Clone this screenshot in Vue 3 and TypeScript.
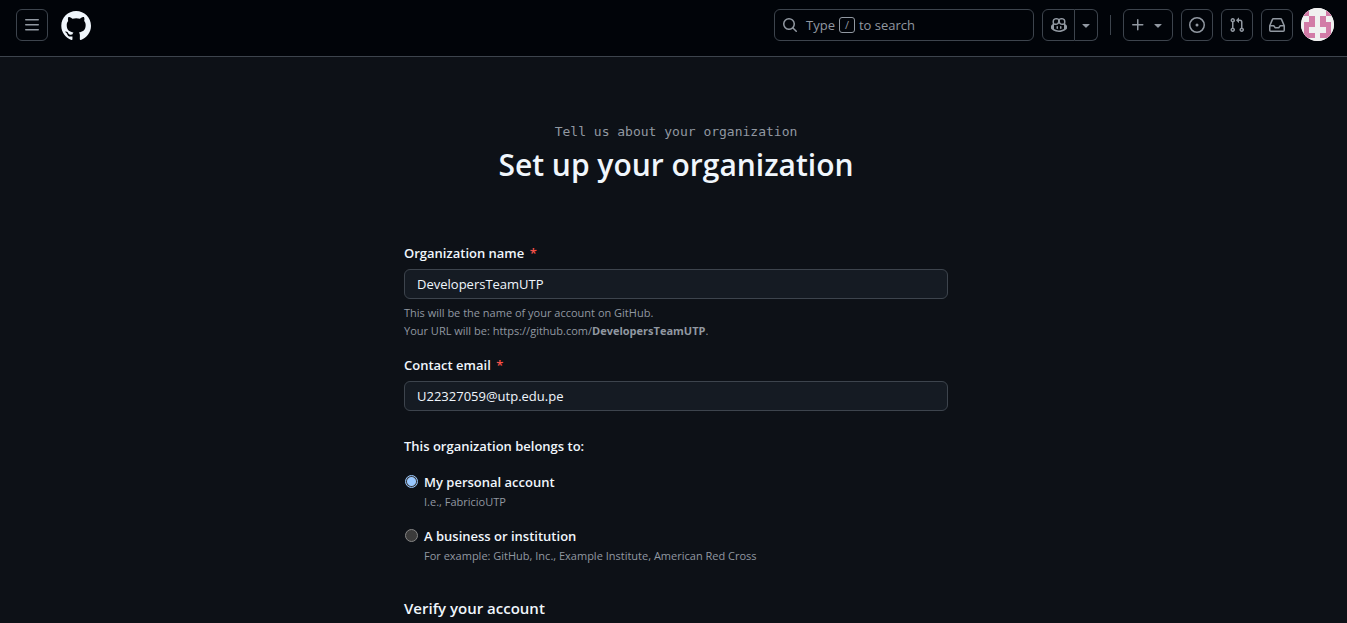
<script setup lang="ts">
import { ref } from 'vue'

interface Owner {
  id: string
  label: string
  hint: string
}

const orgName = ref<string>('DevelopersTeamUTP')
const email = ref<string>('U22327059@utp.edu.pe')
const owner = ref<string>('personal')

const owners: Owner[] = [
  { id: 'personal', label: 'My personal account', hint: 'I.e., FabricioUTP' },
  {
    id: 'business',
    label: 'A business or institution',
    hint: 'For example: GitHub, Inc., Example Institute, American Red Cross',
  },
]
</script>

<template>
  <div class="page">
    <header class="bar">
      <div class="group">
        <button class="btn square" type="button" aria-label="Open menu">
          <svg class="icon" viewBox="0 0 16 16"><path d="M1 2.75A.75.75 0 0 1 1.75 2h12.5a.75.75 0 0 1 0 1.5H1.75A.75.75 0 0 1 1 2.75Zm0 5A.75.75 0 0 1 1.75 7h12.5a.75.75 0 0 1 0 1.5H1.75A.75.75 0 0 1 1 7.75ZM1.75 12h12.5a.75.75 0 0 1 0 1.5H1.75a.75.75 0 0 1 0-1.5Z" /></svg>
        </button>
        <a class="logo" href="#" aria-label="Homepage">
          <svg viewBox="0 0 24 24"><path d="M12.5.75C6.146.75 1 5.896 1 12.25c0 5.089 3.292 9.387 7.863 10.91.575.101.79-.244.79-.546 0-.273-.014-1.178-.014-2.142-2.889.532-3.636-.704-3.866-1.35-.13-.331-.69-1.352-1.18-1.625-.402-.216-.977-.748-.014-.762.906-.014 1.553.834 1.769 1.179 1.035 1.74 2.688 1.25 3.349.948.1-.747.402-1.25.733-1.538-2.559-.287-5.232-1.279-5.232-5.678 0-1.25.445-2.285 1.178-3.09-.115-.288-.517-1.467.115-3.048 0 0 .963-.302 3.163 1.179.92-.259 1.897-.388 2.875-.388.977 0 1.955.13 2.875.388 2.2-1.495 3.162-1.179 3.162-1.179.633 1.581.23 2.76.115 3.048.733.805 1.179 1.825 1.179 3.09 0 4.413-2.688 5.39-5.247 5.678.417.36.776 1.05.776 2.128 0 1.538-.014 2.774-.014 3.162 0 .302.216.662.79.547C20.709 21.637 24 17.324 24 12.25 24 5.896 18.854.75 12.5.75Z" /></svg>
        </a>
      </div>

      <div class="group tools">
        <button class="btn search" type="button">
          <svg class="icon" viewBox="0 0 16 16"><path d="M10.68 11.74a6 6 0 0 1-7.922-8.982 6 6 0 0 1 8.982 7.922l3.04 3.04a.749.749 0 0 1-.326 1.275.749.749 0 0 1-.734-.215ZM11.5 7a4.499 4.499 0 1 0-8.997 0A4.499 4.499 0 0 0 11.5 7Z" /></svg>
          <span class="prompt">Type <kbd>/</kbd> to search</span>
        </button>

        <div class="split">
          <button class="btn square" type="button" aria-label="Copilot">
            <svg class="icon" viewBox="0 0 16 16"><path d="M7.998 15.035c-4.562 0-7.873-2.914-7.998-3.749V9.338c.085-.628.677-1.686 1.588-2.065.013-.07.024-.143.036-.218.029-.183.06-.384.126-.612-.201-.508-.254-1.084-.254-1.656 0-.87.128-1.769.693-2.484.579-.733 1.494-1.124 2.724-1.261 1.206-.134 2.262.034 2.944.765.05.053.096.108.139.165.044-.057.094-.112.143-.165.682-.731 1.738-.899 2.944-.765 1.23.137 2.145.528 2.724 1.261.566.715.693 1.614.693 2.484 0 .572-.053 1.148-.254 1.656.066.228.098.429.126.612.012.076.024.148.037.218.924.385 1.522 1.471 1.591 2.095v1.872c0 .766-3.351 3.795-8.002 3.795Zm0-1.485c2.28 0 4.584-1.11 5.002-1.433V7.862l-.023-.116c-.49.21-1.075.291-1.727.291-1.146 0-2.059-.327-2.71-.991A3.222 3.222 0 0 1 8 6.303a3.24 3.24 0 0 1-.544.743c-.65.664-1.563.991-2.71.991-.652 0-1.236-.081-1.727-.291l-.023.116v4.255c.419.323 2.722 1.433 5.002 1.433ZM6.762 2.83c-.193-.206-.637-.413-1.682-.297-1.019.113-1.479.404-1.713.7-.247.312-.369.789-.369 1.554 0 .793.129 1.171.308 1.371.162.181.519.379 1.442.379.853 0 1.339-.235 1.638-.54.315-.322.527-.827.617-1.553.117-.935-.037-1.395-.241-1.614Zm4.155-.297c-1.044-.116-1.488.091-1.681.297-.204.219-.359.679-.242 1.614.091.726.303 1.231.618 1.553.299.305.784.54 1.638.54.922 0 1.28-.198 1.442-.379.179-.2.308-.578.308-1.371 0-.765-.123-1.242-.37-1.554-.233-.296-.693-.587-1.713-.7Z" /><path d="M6.25 9.037a.75.75 0 0 1 .75.75v1.501a.75.75 0 0 1-1.5 0V9.787a.75.75 0 0 1 .75-.75Zm4.25.75v1.501a.75.75 0 0 1-1.5 0V9.787a.75.75 0 0 1 1.5 0Z" /></svg>
          </button>
          <button class="btn narrow" type="button" aria-label="Copilot options">
            <svg class="icon" viewBox="0 0 16 16"><path d="m4.427 7.427 3.396 3.396a.25.25 0 0 0 .354 0l3.396-3.396A.25.25 0 0 0 11.396 7H4.604a.25.25 0 0 0-.177.427Z" /></svg>
          </button>
        </div>

        <span class="divider"></span>

        <button class="btn create" type="button" aria-label="Create new">
          <svg class="icon" viewBox="0 0 16 16"><path d="M7.75 2a.75.75 0 0 1 .75.75V7h4.25a.75.75 0 0 1 0 1.5H8.5v4.25a.75.75 0 0 1-1.5 0V8.5H2.75a.75.75 0 0 1 0-1.5H7V2.75A.75.75 0 0 1 7.75 2Z" /></svg>
          <svg class="icon" viewBox="0 0 16 16"><path d="m4.427 7.427 3.396 3.396a.25.25 0 0 0 .354 0l3.396-3.396A.25.25 0 0 0 11.396 7H4.604a.25.25 0 0 0-.177.427Z" /></svg>
        </button>
        <button class="btn square" type="button" aria-label="Issues">
          <svg class="icon" viewBox="0 0 16 16"><path d="M8 9.5a1.5 1.5 0 1 0 0-3 1.5 1.5 0 0 0 0 3Z" /><path d="M8 0a8 8 0 1 1 0 16A8 8 0 0 1 8 0ZM1.5 8a6.5 6.5 0 1 0 13 0 6.5 6.5 0 0 0-13 0Z" /></svg>
        </button>
        <button class="btn square" type="button" aria-label="Pull requests">
          <svg class="icon" viewBox="0 0 16 16"><path d="M1.5 3.25a2.25 2.25 0 1 1 3 2.122v5.256a2.251 2.251 0 1 1-1.5 0V5.372A2.25 2.25 0 0 1 1.5 3.25Zm5.677-.177L9.573.677A.25.25 0 0 1 10 .854V2.5h1A2.5 2.5 0 0 1 13.5 5v5.628a2.251 2.251 0 1 1-1.5 0V5a1 1 0 0 0-1-1h-1v1.646a.25.25 0 0 1-.427.177L7.177 3.427a.25.25 0 0 1 0-.354ZM3.75 2.5a.75.75 0 1 0 0 1.5.75.75 0 0 0 0-1.5Zm0 9.5a.75.75 0 1 0 0 1.5.75.75 0 0 0 0-1.5Zm8.25.75a.75.75 0 1 0 1.5 0 .75.75 0 0 0-1.5 0Z" /></svg>
        </button>
        <button class="btn square" type="button" aria-label="Notifications">
          <svg class="icon" viewBox="0 0 16 16"><path d="M2.8 2.06A1.75 1.75 0 0 1 4.41 1h7.18c.7 0 1.333.417 1.61 1.06l2.74 6.395c.04.093.06.194.06.295v4.5A1.75 1.75 0 0 1 14.25 15H1.75A1.75 1.75 0 0 1 0 13.25v-4.5c0-.101.02-.202.06-.295Zm1.61.44a.25.25 0 0 0-.23.152L1.887 8H4.75a.75.75 0 0 1 .6.3L6.625 10h2.75l1.275-1.7a.75.75 0 0 1 .6-.3h2.863L11.82 2.652a.25.25 0 0 0-.23-.152Zm10.09 7h-2.875l-1.275 1.7a.75.75 0 0 1-.6.3h-3.5a.75.75 0 0 1-.6-.3L4.375 9.5H1.5v3.75c0 .138.112.25.25.25h12.5a.25.25 0 0 0 .25-.25Z" /></svg>
        </button>
        <button class="avatar" type="button" aria-label="Account">
          <svg viewBox="0 0 12 12" shape-rendering="crispEdges">
            <path fill="#f0f0f0" d="M0 0h12v12H0z" />
            <path fill="#d27ba7" d="M1 1h2v2H1zM9 1h2v2H9zM3 3h2v4H3zM7 3h2v4H7zM1 5h2v6H1zM9 5h2v6H9zM3 9h2v2H3zM7 9h2v2H7z" />
          </svg>
        </button>
      </div>
    </header>

    <main class="content">
      <form class="setup" @submit.prevent>
        <p class="eyebrow">Tell us about your organization</p>
        <h1>Set up your organization</h1>

        <div class="field">
          <label for="org-name">Organization name <span class="required">*</span></label>
          <input id="org-name" v-model="orgName" type="text" />
          <p class="note">
            This will be the name of your account on GitHub.<br />
            Your URL will be: https://github.com/<strong>{{ orgName }}</strong>.
          </p>
        </div>

        <div class="field">
          <label for="email">Contact email <span class="required">*</span></label>
          <input id="email" v-model="email" type="text" />
        </div>

        <fieldset>
          <legend>This organization belongs to:</legend>
          <div v-for="item in owners" :key="item.id" class="option">
            <input :id="item.id" v-model="owner" type="radio" name="owner" :value="item.id" />
            <div>
              <label :for="item.id">{{ item.label }}</label>
              <p class="hint">{{ item.hint }}</p>
            </div>
          </div>
        </fieldset>

        <h2>Verify your account</h2>
      </form>
    </main>
  </div>
</template>

<style>
body {
  background: #0d1117;
}
</style>

<style scoped>
.page {
  color: #f0f6fc;
  font: 13px/20px "Open Sans", "Noto Sans", sans-serif;
}

.page * {
  box-sizing: border-box;
}

.bar {
  display: flex;
  justify-content: space-between;
  padding: 9px 13px 15px 16px;
  background: #010409;
  border-bottom: 1px solid #3d444d;
}

.group {
  display: flex;
  align-items: center;
  gap: 12px;
}

.tools {
  gap: 8px;
}

.btn {
  display: flex;
  align-items: center;
  justify-content: center;
  height: 32px;
  padding: 0;
  color: #9198a1;
  background: transparent;
  border: 1px solid #3d444d;
  border-radius: 6px;
  font: inherit;
}

.square {
  width: 32px;
}

.icon {
  display: block;
  width: 16px;
  height: 16px;
  fill: currentColor;
}

.logo svg {
  display: block;
  width: 31px;
  height: 31px;
  fill: #f0f6fc;
}

.search {
  width: 260px;
  justify-content: flex-start;
  gap: 8px;
  padding: 0 7px;
}

.prompt {
  display: flex;
  align-items: center;
  gap: 4px;
}

kbd {
  width: 16px;
  height: 16px;
  border: 1px solid #9198a1;
  border-radius: 3px;
  font: 11px/14px "Open Sans", "Noto Sans", sans-serif;
  text-align: center;
}

.split {
  display: flex;
}

.split .square {
  width: 33px;
  border-radius: 6px 0 0 6px;
}

.narrow {
  width: 23px;
  border-left: 0;
  border-radius: 0 6px 6px 0;
}

.divider {
  width: 1px;
  height: 20px;
  margin: 0 4px;
  background: #3d444d;
}

.create {
  width: 50px;
  gap: 4px;
}

.avatar {
  width: 33px;
  height: 33px;
  margin: -1px 0 0;
  padding: 0;
  overflow: hidden;
  border: 0;
  border-radius: 50%;
}

.avatar svg {
  display: block;
}

.content {
  padding: 64px 0 0 5px;
}

.setup {
  max-width: 544px;
  margin: 0 auto;
}

p,
h1,
h2 {
  margin: 0;
}

.eyebrow {
  color: #9198a1;
  font: 13px/22px "DejaVu Sans Mono", monospace;
  text-align: center;
}

h1 {
  margin-bottom: 56px;
  font-size: 30px;
  font-weight: 600;
  line-height: 44px;
  text-align: center;
}

label,
legend {
  font-weight: 700;
}

label,
legend,
h2 {
  font-weight: 600;
}

.field {
  margin-bottom: 15px;
}

.field label {
  display: block;
  margin-bottom: 6px;
}

.required {
  margin-left: 2px;
  color: #f85149;
}

.field input {
  display: block;
  width: 100%;
  height: 30px;
  padding: 0 12px;
  color: #f0f6fc;
  background: #151b23;
  border: 1px solid #3d444d;
  border-radius: 6px;
  font: inherit;
}

.note,
.hint {
  color: #9198a1;
  font-size: 11px;
  line-height: 18px;
}

.note {
  margin-top: 5px;
}

fieldset {
  margin: 25px 0 0;
  padding: 0;
  border: 0;
}

legend {
  margin-bottom: 16px;
  padding: 0;
}

.option {
  display: flex;
  gap: 6px;
  margin-bottom: 14px;
}

.option input {
  appearance: none;
  width: 13px;
  height: 13px;
  margin: 3px 0 0 1px;
  background: #3b3b3b;
  border: 1px solid #858585;
  border-radius: 50%;
}

.option input:checked {
  border-color: #99c8ff;
  background: radial-gradient(circle, #99c8ff 4px, #3b3b3b 5px);
}

.option label {
  display: block;
}

.hint {
  line-height: 20px;
}

h2 {
  margin-top: 16px;
  font-size: 15px;
  line-height: 24px;
}
</style>
